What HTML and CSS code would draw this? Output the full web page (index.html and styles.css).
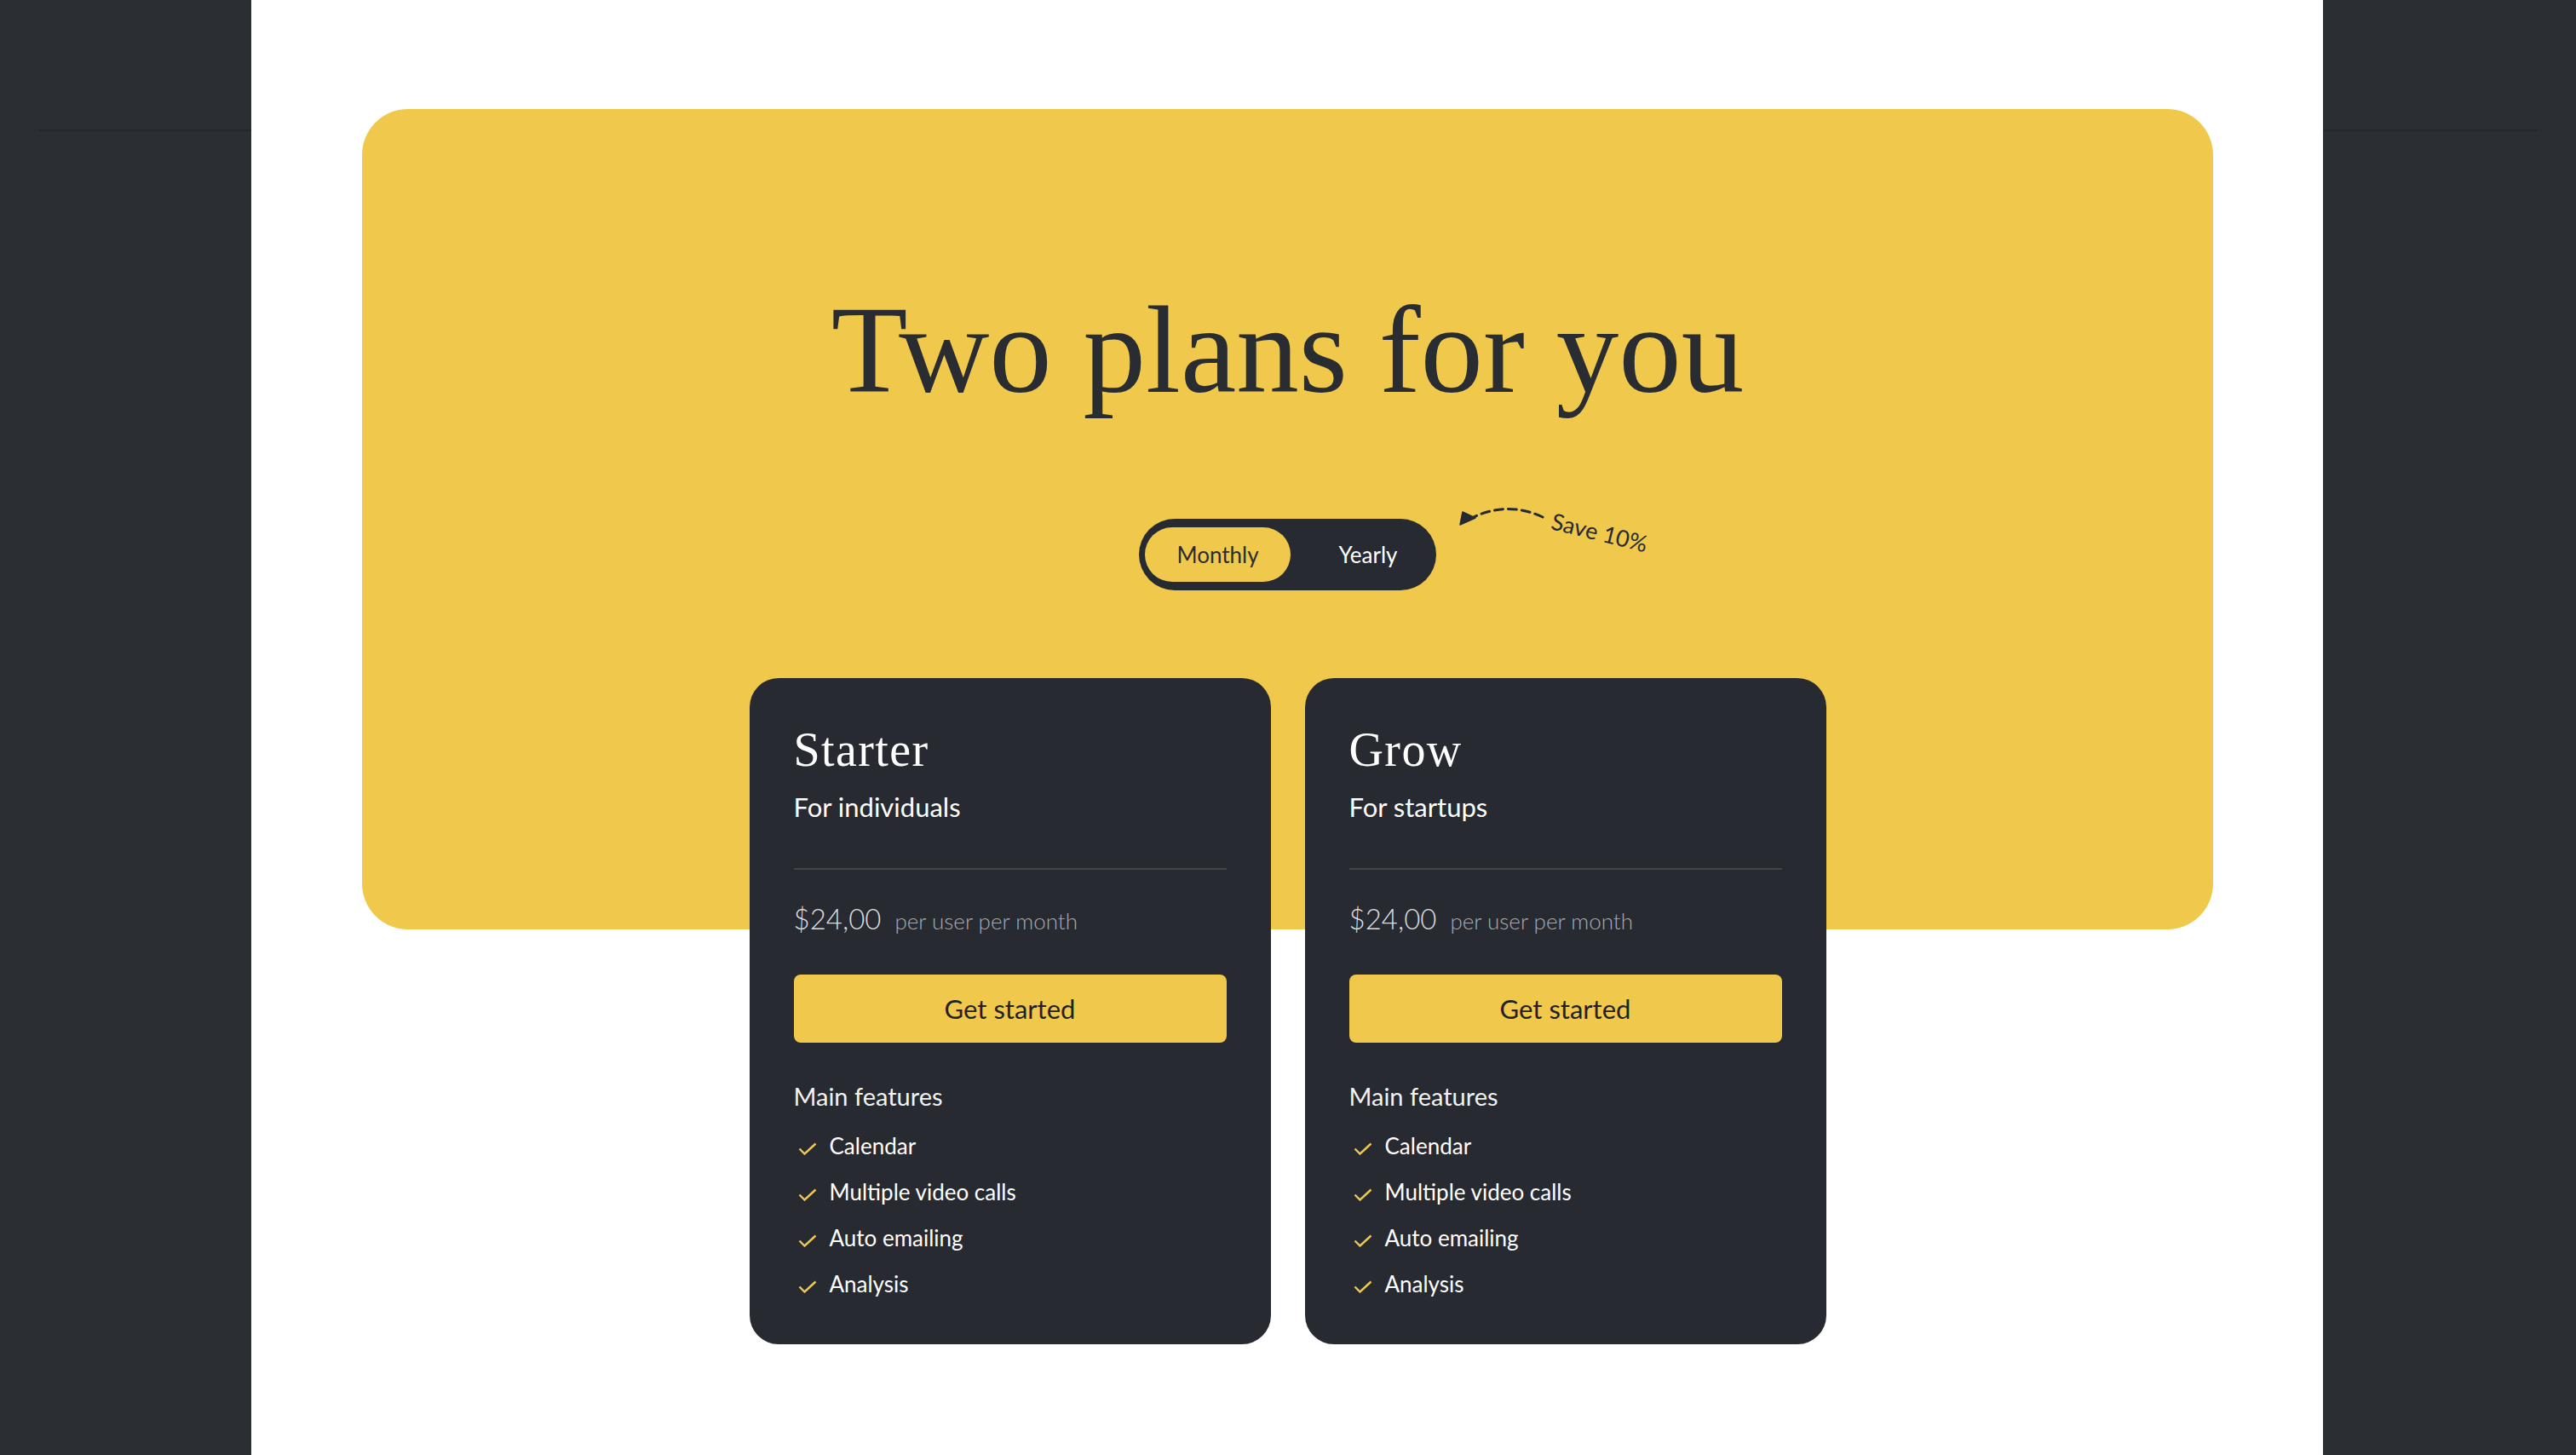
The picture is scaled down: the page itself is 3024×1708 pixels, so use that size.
FILE: index.html
```html
<!DOCTYPE html>
<html lang="en">
<head>
<meta charset="utf-8">
<title>Two plans for you</title>
<link rel="stylesheet" href="styles.css">
</head>
<body>
<div class="app">
  <aside class="side side-left"><div class="side-head"></div></aside>
  <main class="page">
    <section class="hero">
      <h1 class="hero-title">Two plans for you</h1>
      <div class="billing">
        <div class="toggle">
          <span class="opt opt-active">Monthly</span>
          <span class="opt opt-yearly">Yearly</span>
        </div>
        <svg class="save-arrow" viewBox="0 0 112 32" width="112" height="32" aria-hidden="true">
          <path d="M107 17 Q 66 -2 26 17" fill="none" stroke="#272a30" stroke-width="3" stroke-dasharray="10 6" stroke-linecap="round"/>
          <polygon points="10,26 13,11 28,18" fill="#272a30" stroke="#272a30" stroke-width="1.5" stroke-linejoin="round"/>
        </svg>
        <span class="save-text">Save 10%</span>
      </div>
      <div class="plans">
        <article class="card">
          <h2 class="card-title">Starter</h2>
          <p class="card-sub">For individuals</p>
          <hr class="card-rule">
          <div class="price"><span class="price-amount">$24,00</span><span class="price-unit">per user per month</span></div>
          <button class="cta">Get started</button>
          <h3 class="feat-title">Main features</h3>
          <ul class="feats">
            <li class="feat"><svg class="check" viewBox="0 0 22 15" width="22" height="15"><path d="M1.5 7.5 L7.5 13.5 L20.5 1.5" fill="none" stroke="#f0c94c" stroke-width="2.4"/></svg>Calendar</li>
            <li class="feat"><svg class="check" viewBox="0 0 22 15" width="22" height="15"><path d="M1.5 7.5 L7.5 13.5 L20.5 1.5" fill="none" stroke="#f0c94c" stroke-width="2.4"/></svg>Multiple video calls</li>
            <li class="feat"><svg class="check" viewBox="0 0 22 15" width="22" height="15"><path d="M1.5 7.5 L7.5 13.5 L20.5 1.5" fill="none" stroke="#f0c94c" stroke-width="2.4"/></svg>Auto emailing</li>
            <li class="feat"><svg class="check" viewBox="0 0 22 15" width="22" height="15"><path d="M1.5 7.5 L7.5 13.5 L20.5 1.5" fill="none" stroke="#f0c94c" stroke-width="2.4"/></svg>Analysis</li>
          </ul>
        </article>
        <article class="card">
          <h2 class="card-title">Grow</h2>
          <p class="card-sub">For startups</p>
          <hr class="card-rule">
          <div class="price"><span class="price-amount">$24,00</span><span class="price-unit">per user per month</span></div>
          <button class="cta">Get started</button>
          <h3 class="feat-title">Main features</h3>
          <ul class="feats">
            <li class="feat"><svg class="check" viewBox="0 0 22 15" width="22" height="15"><path d="M1.5 7.5 L7.5 13.5 L20.5 1.5" fill="none" stroke="#f0c94c" stroke-width="2.4"/></svg>Calendar</li>
            <li class="feat"><svg class="check" viewBox="0 0 22 15" width="22" height="15"><path d="M1.5 7.5 L7.5 13.5 L20.5 1.5" fill="none" stroke="#f0c94c" stroke-width="2.4"/></svg>Multiple video calls</li>
            <li class="feat"><svg class="check" viewBox="0 0 22 15" width="22" height="15"><path d="M1.5 7.5 L7.5 13.5 L20.5 1.5" fill="none" stroke="#f0c94c" stroke-width="2.4"/></svg>Auto emailing</li>
            <li class="feat"><svg class="check" viewBox="0 0 22 15" width="22" height="15"><path d="M1.5 7.5 L7.5 13.5 L20.5 1.5" fill="none" stroke="#f0c94c" stroke-width="2.4"/></svg>Analysis</li>
          </ul>
        </article>
      </div>
    </section>
  </main>
  <aside class="side side-right"><div class="side-head"></div></aside>
</div>
</body>
</html>
```

FILE: styles.css
```css
* { box-sizing: border-box; }

html, body {
  margin: 0;
  padding: 0;
  height: 1708px;
  overflow: hidden;
  background: #2b2e33;
  font-family: "Lato", "Liberation Sans", sans-serif;
}

.app {
  display: flex;
  height: 1708px;
}

.side {
  background: #2b2e33;
  flex: none;
}
.side-left { width: 295px; padding-left: 46px; }
.side-right { width: 297px; padding-right: 46px; }

.side-head {
  height: 154px;
  border-bottom: 2px solid #23262a;
}

.page {
  flex: none;
  width: 2432px;
  background: #ffffff;
  padding: 128px 129px 0 130px;
}

.hero {
  height: 963px;
  background: #f0c94c;
  border-radius: 54px;
  display: flex;
  flex-direction: column;
  align-items: center;
  padding-top: 209px;
}

.hero-title {
  margin: 0;
  font-family: "Liberation Serif", "Times New Roman", serif;
  font-weight: 400;
  font-size: 147px;
  line-height: 1;
  color: #292c31;
  letter-spacing: 0;
}

.billing {
  position: relative;
  margin-top: 125px;
}

.toggle {
  display: flex;
  width: 349px;
  height: 84px;
  padding: 10px 7px;
  background: #272a30;
  border-radius: 42px;
}

.opt {
  display: flex;
  align-items: center;
  justify-content: center;
  height: 64px;
  font-size: 26px;
  font-weight: 400;
  color: #ffffff;
}
.opt-active {
  width: 171px;
  background: #f0c94c;
  color: #2a2d32;
  border-radius: 32px;
}
.opt-yearly {
  width: 164px;
  padding-left: 18px;
}

.save-arrow {
  position: absolute;
  left: 367px;
  top: -19px;
}

.save-text {
  position: absolute;
  left: 485px;
  top: -15px;
  font-size: 27px;
  color: #272a30;
  white-space: nowrap;
  transform: rotate(14deg);
  transform-origin: left center;
}

.plans {
  display: flex;
  gap: 40px;
  margin-top: 103px;
}

.card {
  width: 612px;
  height: 782px;
  background: #272a30;
  border-radius: 34px;
  padding: 56px 52px 0 52px;
  color: #ffffff;
}

.card-title {
  margin: 0;
  font-family: "Liberation Serif", "Times New Roman", serif;
  font-weight: 400;
  font-size: 56px;
  line-height: 1;
  letter-spacing: 1.4px;
}

.card-sub {
  margin: 24px 0 0;
  font-size: 31px;
  line-height: 1;
  font-weight: 400;
}

.card-rule {
  margin: 56px 0 0;
  border: 0;
  height: 2px;
  background: #43464b;
}

.price {
  display: flex;
  align-items: baseline;
  gap: 16px;
  margin-top: 41px;
  line-height: 1;
}
.price-amount {
  font-size: 33px;
  font-weight: 300;
  color: #dcdddf;
}
.price-unit {
  font-size: 26px;
  font-weight: 300;
  color: #a9abae;
}

.cta {
  display: flex;
  align-items: center;
  justify-content: center;
  width: 100%;
  height: 80px;
  margin-top: 49px;
  border: 0;
  border-radius: 8px;
  background: #f0c94c;
  color: #1f2226;
  font-family: "Lato", "Liberation Sans", sans-serif;
  font-size: 31px;
  font-weight: 400;
  padding: 0;
}

.feat-title {
  margin: 48px 0 0;
  font-size: 29px;
  line-height: 1;
  font-weight: 400;
  color: #f2f2f2;
}

.feats {
  list-style: none;
  margin: 17px 0 0;
  padding: 0;
}

.feat {
  display: flex;
  align-items: center;
  height: 54px;
  font-size: 26px;
  color: #ffffff;
}

.check {
  flex: none;
  margin: 7px 15px 0 5px;
}
```
